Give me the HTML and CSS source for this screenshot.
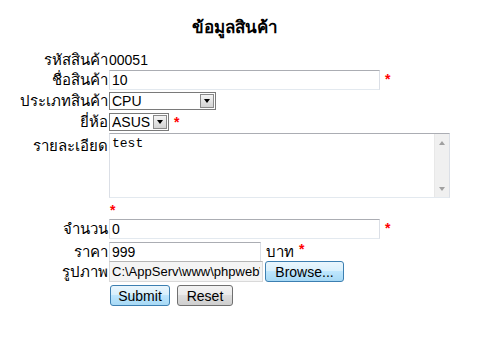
FILE: index.html
```html
<!DOCTYPE html>
<html lang="th">
<head>
<meta charset="utf-8">
<title>ข้อมูลสินค้า</title>
<link rel="stylesheet" href="styles.css">
</head>
<body>
<h1 class="title">ข้อมูลสินค้า</h1>
<form class="form">
  <div class="row r-code">
    <label class="lbl">รหัสสินค้า</label>
    <div class="field"><span class="value">00051</span></div>
  </div>
  <div class="row r-name">
    <label class="lbl">ชื่อสินค้า</label>
    <div class="field"><input class="text wide" type="text" value="10"><span class="req">*</span></div>
  </div>
  <div class="row r-type">
    <label class="lbl">ประเภทสินค้า</label>
    <div class="field"><span class="sel sel-type"><select><option>CPU</option></select><span class="arrow"></span></span></div>
  </div>
  <div class="row r-brand">
    <label class="lbl">ยี่ห้อ</label>
    <div class="field"><span class="sel sel-brand"><select><option>ASUS</option></select><span class="arrow"></span></span><span class="req">*</span></div>
  </div>
  <div class="row r-desc">
    <label class="lbl lbl-top">รายละเอียด</label>
    <div class="field">
      <div class="area">
        <textarea>test</textarea>
        <div class="vscroll"><span class="up"></span><span class="down"></span></div>
      </div>
    </div>
  </div>
  <div class="row r-star">
    <span class="lbl"></span>
    <div class="field"><span class="req">*</span></div>
  </div>
  <div class="row r-qty">
    <label class="lbl">จำนวน</label>
    <div class="field"><input class="text wide" type="text" value="0"><span class="req">*</span></div>
  </div>
  <div class="row r-price">
    <label class="lbl">ราคา</label>
    <div class="field"><input class="text narrow" type="text" value="999"><span class="unit">บาท</span><span class="req">*</span></div>
  </div>
  <div class="row r-pic">
    <label class="lbl">รูปภาพ</label>
    <div class="field"><input class="text filepath" type="text" value="C:\AppServ\www\phpweb\images\cpu.jpg" readonly><button type="button" class="btn browse">Browse...</button></div>
  </div>
  <div class="row r-btns">
    <span class="lbl"></span>
    <div class="field"><button type="submit" class="btn submit">Submit</button><button type="reset" class="btn reset">Reset</button></div>
  </div>
</form>
</body>
</html>
```
FILE: styles.css
```css
html, body {
  margin: 0;
  padding: 0;
  background: #fff;
}
body {
  font-family: "Liberation Sans", Arial, sans-serif;
  font-size: 15px;
  color: #000;
}
.title {
  margin: 0;
  padding-top: 13px;
  height: 37px;
  box-sizing: border-box;
  width: 470px;
  text-align: center;
  font-size: 17px;
  font-weight: bold;
}
.form {
  display: flex;
  flex-direction: column;
  padding-left: 8px;
}
.row {
  display: grid;
  grid-template-columns: 100px auto;
  column-gap: 1px;
  align-items: center;
}
.lbl {
  text-align: right;
  font-size: 15px;
  line-height: 18px;
  white-space: nowrap;
}
.lbl-top {
  align-self: start;
  padding-top: 4px;
}
.field {
  display: flex;
  align-items: center;
}
.value {
  font-size: 14px;
}
.r-code { margin-top: 14px; height: 18px; }
.r-name { margin-top: 1px; height: 20px; }
.r-type { margin-top: 2px; height: 18px; }
.r-brand { margin-top: 3px; height: 18px; }
.r-desc { margin-top: 2px; height: 65px; align-items: start; }
.r-star { margin-top: 1px; height: 18px; align-items: start; }
.r-qty { margin-top: 2px; height: 20px; }
.r-price { margin-top: 1px; height: 20px; }
.r-pic { margin-top: 1px; height: 21px; }
.r-btns { margin-top: 3px; height: 21px; }

.text {
  box-sizing: border-box;
  height: 20px;
  margin: 0;
  padding: 1px 2px;
  font-family: "Liberation Sans", Arial, sans-serif;
  font-size: 14px;
  color: #000;
  border: 1px solid #dbdfe6;
  border-top-color: #abadb3;
  border-bottom-color: #e3e9ef;
  background: #fff;
  outline: none;
}
.wide { width: 271px; }
.narrow { width: 152px; }
.filepath {
  width: 154px;
  height: 21px;
  font-size: 13px;
  background: #f4f4f4;
  border-color: #d9d9d9;
  border-top-color: #b5b5b5;
  overflow: hidden;
}
.req {
  color: #f00;
  font-weight: bold;
  font-size: 14px;
  align-self: flex-start;
  line-height: 14px;
  margin-left: 5px;
  padding-top: 2px;
}
.r-star .req {
  margin-left: 1px;
  padding-top: 4px;
}
.unit {
  margin-left: 5px;
  font-size: 15px;
}

.sel {
  position: relative;
  display: inline-block;
  height: 18px;
}
.sel select {
  -webkit-appearance: none;
  appearance: none;
  box-sizing: border-box;
  height: 18px;
  margin: 0;
  padding: 0 0 0 2px;
  font-family: "Liberation Sans", Arial, sans-serif;
  font-size: 14px;
  color: #000;
  background: #fff;
  border: 1px solid #7a7a7a;
  border-radius: 0;
  outline: none;
}
.sel-type select { width: 107px; }
.sel-brand select { width: 60px; }
.arrow {
  position: absolute;
  top: 2px;
  right: 2px;
  width: 14px;
  height: 14px;
  box-sizing: border-box;
  border: 1px solid #8a8a8a;
  background: linear-gradient(#f4f4f4, #d4d4d4);
}
.arrow::after {
  content: "";
  position: absolute;
  left: 3px;
  top: 4px;
  border-left: 3.5px solid transparent;
  border-right: 3.5px solid transparent;
  border-top: 4px solid #000;
}

.area {
  display: flex;
  width: 341px;
  height: 65px;
  box-sizing: border-box;
  border: 1px solid #dbdfe6;
  border-top-color: #abadb3;
  border-bottom-color: #e3e9ef;
}
.area textarea {
  flex: 1;
  border: none;
  margin: 0;
  padding: 2px 2px;
  resize: none;
  outline: none;
  font-family: "Liberation Mono", "Courier New", monospace;
  font-size: 13px;
  color: #000;
}
.vscroll {
  width: 15px;
  background: #f0f0f0;
  border-left: 1px solid #e8e8e8;
  display: flex;
  flex-direction: column;
  justify-content: space-between;
  align-items: center;
  padding: 7px 0 6px;
  box-sizing: border-box;
}
.up {
  border-left: 3.5px solid transparent;
  border-right: 3.5px solid transparent;
  border-bottom: 4px solid #a0a0a0;
}
.down {
  border-left: 3.5px solid transparent;
  border-right: 3.5px solid transparent;
  border-top: 4px solid #a0a0a0;
}

.btn {
  box-sizing: border-box;
  height: 21px;
  margin: 0;
  padding: 0 6px;
  font-family: "Liberation Sans", Arial, sans-serif;
  font-size: 14px;
  color: #000;
  border: 1px solid #707070;
  border-radius: 3px;
  background: linear-gradient(#f2f2f2 0%, #ebebeb 45%, #dddddd 50%, #cfcfcf 100%);
}
.browse {
  width: 79px;
  margin-left: 2px;
  border-color: #3c7fb1;
  background: linear-gradient(#eaf6fd 0%, #d9f0fc 45%, #bee6fd 50%, #a7d9f5 100%);
}
.submit {
  width: 60px;
  margin-left: 1px;
  border-color: #3c7fb1;
  background: linear-gradient(#eaf6fd 0%, #d9f0fc 45%, #bee6fd 50%, #a7d9f5 100%);
}
.reset {
  width: 56px;
  margin-left: 7px;
}
```
